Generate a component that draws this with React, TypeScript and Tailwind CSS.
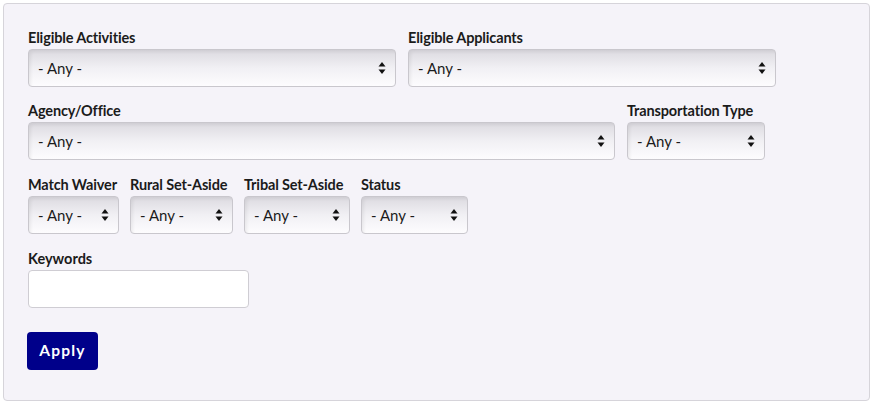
import React from "react";

function Arrows() {
  return (
    <svg width="8" height="14" viewBox="0 0 8 14" className="shrink-0">
      <path d="M4 1 L7.5 5.5 H0.5 Z" fill="#111" />
      <path d="M4 13 L7.5 8.5 H0.5 Z" fill="#111" />
    </svg>
  );
}

function Field({ label, width }: { label: string; width: string }) {
  return (
    <div className={`${width} flex flex-col shrink-0`}>
      <label className="text-[14.5px] font-bold leading-[20px] text-[#1b1b1b] whitespace-nowrap tracking-[-0.01em]">
        {label}
      </label>
      <div className="mt-px h-[38px] flex items-center justify-between pl-[9px] pr-[9px] rounded-[4px] border border-[#c9c7cd] bg-gradient-to-b from-[#dcdae0] via-[#f1f0f4] to-[#fdfcfe] shadow-[inset_2px_2px_3px_rgba(0,0,0,0.06)]">
        <span className="text-[15px] text-[#1b1b1b]">- Any -</span>
        <Arrows />
      </div>
    </div>
  );
}

export default function App() {
  return (
    <div className="bg-white w-[873px] h-[404px] p-[3px]" style={{ fontFamily: "Lato, 'Liberation Sans', sans-serif" }}>
      <div className="h-full border border-[#d6d4da] rounded-[4px] bg-[#f5f3f9] pl-[24px] pt-[24px]">
        <div className="flex gap-[12px]">
          <Field label="Eligible Activities" width="w-[368px]" />
          <Field label="Eligible Applicants" width="w-[368px]" />
        </div>
        <div className="flex gap-[12px] mt-[14px]">
          <Field label="Agency/Office" width="w-[587px]" />
          <Field label="Transportation Type" width="w-[138px]" />
        </div>
        <div className="flex gap-[11px] mt-[15px]">
          <Field label="Match Waiver" width="w-[91px]" />
          <Field label="Rural Set-Aside" width="w-[103px]" />
          <Field label="Tribal Set-Aside" width="w-[106px]" />
          <Field label="Status" width="w-[107px]" />
        </div>
        <div className="flex flex-col mt-[15px]">
          <label className="text-[14.5px] font-bold leading-[20px] text-[#1b1b1b]">Keywords</label>
          <input
            type="text"
            className="mt-px w-[221px] h-[38px] rounded-[4px] border border-[#cfcdd3] bg-white px-2 outline-none"
          />
        </div>
        <button className="mt-[24px] -ml-px w-[71px] h-[38px] rounded-[4px] bg-[#00008a] text-white text-[15.5px] font-bold tracking-[0.08em]">
          Apply
        </button>
      </div>
    </div>
  );
}
